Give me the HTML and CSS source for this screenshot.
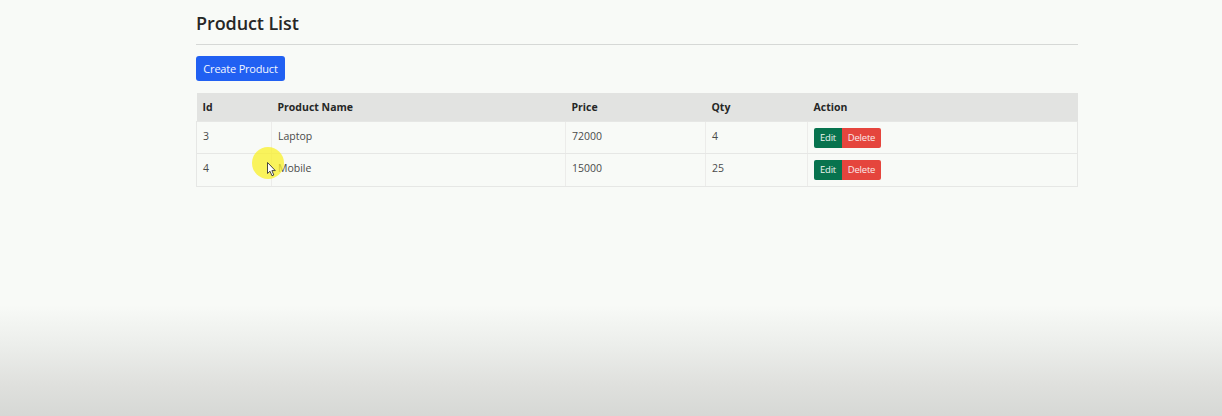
FILE: index.html
```html
<!DOCTYPE html>
<html>
<head>
<meta charset="utf-8">
<link rel="stylesheet" href="styles.css">
</head>
<body>
<div class="page">
  <div class="container">
    <h1 class="title">Product List</h1>
    <hr class="rule">
    <button class="btn-create">Create Product</button>
    <table class="table">
      <thead>
        <tr>
          <th class="c-id">Id</th>
          <th class="c-name">Product Name</th>
          <th class="c-price">Price</th>
          <th class="c-qty">Qty</th>
          <th class="c-act">Action</th>
        </tr>
      </thead>
      <tbody>
        <tr>
          <td>3</td>
          <td>Laptop</td>
          <td>72000</td>
          <td>4</td>
          <td><div class="grp"><button class="btn-edit">Edit</button><button class="btn-del">Delete</button></div></td>
        </tr>
        <tr class="row2">
          <td>4</td>
          <td>Mobile</td>
          <td>15000</td>
          <td>25</td>
          <td><div class="grp"><button class="btn-edit">Edit</button><button class="btn-del">Delete</button></div></td>
        </tr>
      </tbody>
    </table>
  </div>
  <div class="highlight"></div>
  <svg class="cursor" width="10" height="15" viewBox="0 0 10 15"><path d="M0.5 0.5 L0.5 11.5 L3 9.2 L5 13.8 L6.8 13 L4.9 8.6 L8.3 8.6 Z" fill="#fff" stroke="#333" stroke-width="0.9" stroke-linejoin="round"/></svg>
</div>
</body>
</html>
```
FILE: styles.css
```css
html, body {
  margin: 0;
  padding: 0;
}
body {
  width: 1222px;
  height: 416px;
  overflow: hidden;
  font-family: "Open Sans", "Noto Sans", sans-serif;
  color: #2b2c2b;
  background: linear-gradient(to bottom, #f8faf7 0px, #f8faf7 305px, #eceeeb 345px, #dfe0dd 385px, #d6d8d5 416px);
}
.page {
  position: relative;
  height: 416px;
}
.container {
  width: 882px;
  margin-left: 196px;
  padding-top: 10px;
}
.title {
  margin: 0;
  font-size: 18px;
  font-weight: 600;
  line-height: 26px;
  color: #262726;
  letter-spacing: -0.1px;
}
.rule {
  margin: 8px 0 0 0;
  border: 0;
  border-top: 1.5px solid #d6d8d6;
  height: 0;
}
.btn-create {
  display: block;
  margin-top: 11px;
  width: 89px;
  height: 25px;
  padding: 0;
  border: 0;
  border-radius: 3px;
  background: #2160f2;
  color: #f3f6ff;
  font-family: inherit;
  font-size: 11px;
  line-height: 25px;
  letter-spacing: -0.2px;
}
.table {
  margin-top: 12px;
  width: 882px;
  border-collapse: collapse;
  font-size: 10.5px;
}
.table th {
  background: #e2e3e1;
  text-align: left;
  font-weight: 700;
  height: 28px;
  padding: 0 6px;
  color: #262726;
  border: 0;
}
.table td {
  height: 32px;
  padding: 0 6px;
  border-top: 1px solid #e6e7e5;
  border-bottom: 1px solid #e6e7e5;
  border-left: 1px solid #ececea;
  color: #4a4b4a;
  vertical-align: top;
  padding-top: 7px;
  box-sizing: border-box;
}
.table .row2 td { height: 33px; }
.table tbody tr td:first-child { border-left: 1px solid #e6e7e5; }
.table tbody tr td:last-child { border-right: 1px solid #e6e7e5; }
.c-id { width: 63px; }
.c-name { width: 282px; }
.c-price { width: 128px; }
.c-qty { width: 90px; }
.grp {
  display: flex;
  margin-top: -1px;
}
.btn-edit, .btn-del {
  height: 20px;
  padding: 0;
  border: 0;
  font-family: inherit;
  font-size: 9.5px;
  line-height: 20px;
  color: #eef5f0;
  letter-spacing: -0.2px;
}
.btn-edit {
  width: 28px;
  background: #07734e;
  border-radius: 2px 0 0 2px;
}
.btn-del {
  width: 39px;
  background: #e5453d;
  color: #fbeaea;
  border-radius: 0 2px 2px 0;
}
.highlight {
  position: absolute;
  left: 252px;
  top: 147px;
  width: 32px;
  height: 32px;
  border-radius: 50%;
  background: rgba(250, 240, 40, 0.75);
}
.cursor {
  position: absolute;
  left: 267px;
  top: 162px;
}
```
